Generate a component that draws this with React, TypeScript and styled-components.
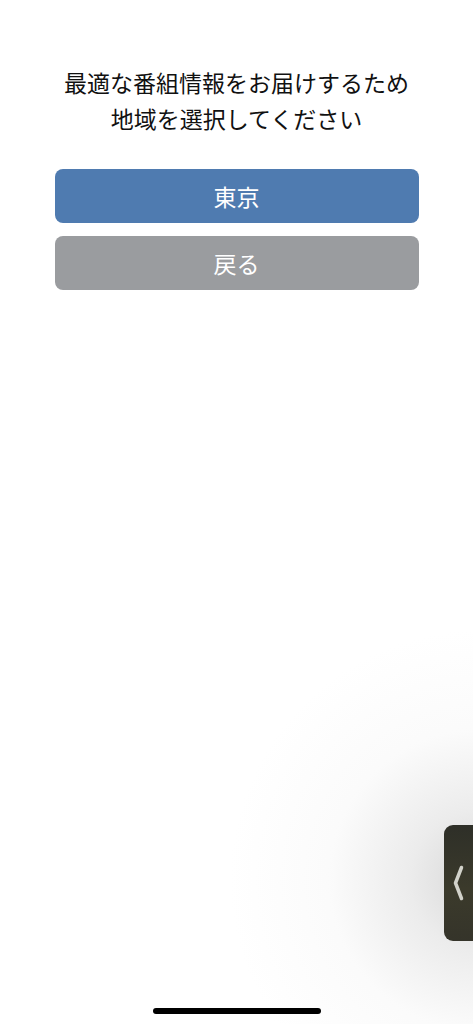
import React from "react";
import styled, { createGlobalStyle } from "styled-components";

const Global = createGlobalStyle`
  html, body { margin: 0; padding: 0; background: #ffffff; }
  body { font-family: "Noto Sans CJK JP", "Noto Sans", sans-serif; }
`;

const Screen = styled.div`
  position: relative;
  width: 473px;
  height: 1024px;
  overflow: hidden;
  background: #ffffff;
  display: flex;
  flex-direction: column;
  align-items: center;
  padding-top: 64px;
  box-sizing: border-box;
`;

const Shade = styled.div`
  position: absolute;
  left: 0;
  top: 0;
  right: 0;
  bottom: 0;
  pointer-events: none;
  background: radial-gradient(
    circle at 480px 880px,
    rgba(205, 205, 205, 0.8) 0px,
    rgba(220, 220, 220, 0.55) 70px,
    rgba(240, 240, 240, 0.28) 150px,
    rgba(255, 255, 255, 0) 250px
  );
`;

const Title = styled.h1`
  margin: 0;
  font-size: 23px;
  font-weight: 400;
  line-height: 36px;
  color: #111111;
  text-align: center;
  position: relative;
`;

const Buttons = styled.div`
  margin-top: 33px;
  width: 364px;
  display: flex;
  flex-direction: column;
  gap: 13px;
  position: relative;
`;

const Button = styled.button<{ $tone: "primary" | "muted" }>`
  height: 54px;
  border: none;
  border-radius: 8px;
  background: ${(p) => (p.$tone === "primary" ? "#4f7bb0" : "#9a9c9f")};
  color: #ffffff;
  font-family: "Noto Sans CJK JP", "Noto Sans", sans-serif;
  font-size: 23px;
  font-weight: 400;
  display: flex;
  align-items: center;
  justify-content: center;
  padding: 0;
  cursor: pointer;
`;

const Handle = styled.div`
  position: absolute;
  left: 444px;
  top: 825px;
  width: 40px;
  height: 116px;
  border-radius: 9px;
  background: linear-gradient(180deg, #2e2f28 0%, #3b3a2b 55%, #35342a 100%);
  display: flex;
  align-items: center;
  padding-left: 8px;
  box-sizing: border-box;
`;

const HomeBar = styled.div`
  position: absolute;
  left: 153px;
  top: 1008px;
  width: 168px;
  height: 6px;
  border-radius: 3px;
  background: #000000;
`;

export default function App() {
  return (
    <>
      <Global />
      <Screen>
        <Shade />
        <Title>
          最適な番組情報をお届けするため
          <br />
          地域を選択してください
        </Title>
        <Buttons>
          <Button $tone="primary">東京</Button>
          <Button $tone="muted">戻る</Button>
        </Buttons>
        <Handle>
          <svg width="13" height="36" viewBox="0 0 13 36">
            <path
              d="M9.5 2.5 L3.5 18 L9.5 33.5"
              fill="none"
              stroke="#d2d2ca"
              strokeWidth="3.5"
              strokeLinecap="round"
              strokeLinejoin="round"
            />
          </svg>
        </Handle>
        <HomeBar />
      </Screen>
    </>
  );
}
